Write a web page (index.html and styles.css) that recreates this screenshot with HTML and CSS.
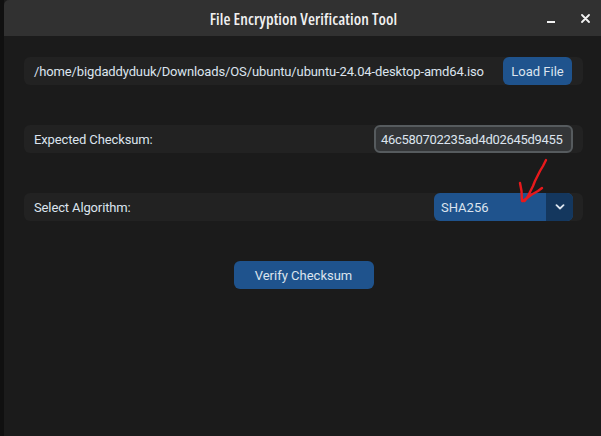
FILE: index.html
```html
<!DOCTYPE html>
<html>
<head>
<meta charset="utf-8">
<link rel="stylesheet" href="styles.css">
</head>
<body>
<div class="screen">
  <div class="edge"></div>
  <div class="window">
    <div class="titlebar">
      <div class="title">File Encryption Verification Tool</div>
      <div class="controls">
        <span class="min"></span>
        <svg class="close" width="9" height="9" viewBox="0 0 9 9"><path d="M1 1 L8 8 M8 1 L1 8" stroke="#f2f2f2" stroke-width="1.8" stroke-linecap="round"/></svg>
      </div>
    </div>
    <div class="content">
      <div class="row">
        <span class="label">/home/bigdaddyduuk/Downloads/OS/ubuntu/ubuntu-24.04-desktop-amd64.iso</span>
        <button class="btn load">Load File</button>
      </div>
      <div class="row">
        <span class="label">Expected Checksum:</span>
        <div class="entry">46c580702235ad4d02645d9455</div>
      </div>
      <div class="row">
        <span class="label">Select Algorithm:</span>
        <div class="select">
          <span class="select-value">SHA256</span>
          <span class="select-arrow">
            <svg width="10" height="6" viewBox="0 0 10 6"><path d="M1.5 1.2 L5 4.5 L8.5 1.2" fill="none" stroke="#dce4ee" stroke-width="1.8" stroke-linecap="round" stroke-linejoin="round"/></svg>
          </span>
        </div>
      </div>
      <div class="actions">
        <button class="btn verify">Verify Checksum</button>
      </div>
    </div>
  </div>
  <svg class="annotation" width="40" height="50" viewBox="0 0 40 50">
    <path d="M30 3 L27 9 L24 14 L22 18 L19 24 L17 29 L14 35 L11 41 L8.5 44" fill="none" stroke="#e8191c" stroke-width="2.4" stroke-linecap="round" stroke-linejoin="round"/>
    <path d="M4 26 L5.5 34 L6 44 L9 43" fill="none" stroke="#e8191c" stroke-width="2.4" stroke-linecap="round" stroke-linejoin="round"/>
    <path d="M7 44 L15 38 L22 34 L26 31" fill="none" stroke="#e8191c" stroke-width="2.4" stroke-linecap="round" stroke-linejoin="round"/>
  </svg>
</div>
</body>
</html>
```

FILE: styles.css
```css
html, body {
  margin: 0;
  padding: 0;
  background: #1b1b1b;
}

.screen {
  position: relative;
  display: flex;
  width: 601px;
  height: 436px;
  overflow: hidden;
  font-family: Roboto, "Noto Sans", sans-serif;
}

.edge {
  width: 4px;
  flex: none;
  background: #101010;
}

.window {
  flex: 1;
  display: flex;
  flex-direction: column;
  background: #1b1b1b;
}

.titlebar {
  position: relative;
  height: 36px;
  flex: none;
  background: #313131;
  border-top-left-radius: 5px;
  display: flex;
  align-items: center;
  justify-content: center;
}

.title {
  font-family: "Open Sans", Roboto, sans-serif;
  font-stretch: 75%;
  font-weight: 600;
  font-size: 16px;
  letter-spacing: 0.1px;
  color: #f0f0f0;
  margin-left: 2px;
  margin-top: 1px;
}

.controls {
  position: absolute;
  right: 11px;
  top: 0;
  height: 36px;
  display: flex;
  align-items: center;
  gap: 26px;
}

.min {
  display: block;
  width: 8px;
  height: 2px;
  background: #f2f2f2;
  margin-top: 7px;
}

.close {
  display: block;
}

.content {
  padding: 21px 18px 0 20px;
  display: flex;
  flex-direction: column;
  gap: 40px;
}

.row {
  height: 28px;
  box-sizing: border-box;
  background: #222222;
  border-radius: 6px;
  display: flex;
  align-items: center;
  justify-content: space-between;
  padding: 0 10px 0 10px;
}

.row:first-child {
  padding-right: 11px;
}

.label {
  font-size: 13px;
  letter-spacing: -0.13px;
  color: #dce4ee;
  white-space: nowrap;
}

.btn {
  font-family: Roboto, "Noto Sans", sans-serif;
  font-size: 13px;
  color: #dce4ee;
  background: #1f538d;
  border: none;
  border-radius: 6px;
  height: 28px;
  padding: 0;
  cursor: pointer;
}

.load {
  width: 69px;
}

.entry {
  box-sizing: border-box;
  width: 199px;
  height: 28px;
  border: 2px solid #565b5e;
  background: #343638;
  border-radius: 6px;
  color: #dce4ee;
  font-size: 13px;
  letter-spacing: -0.3px;
  padding-left: 5px;
  display: flex;
  align-items: center;
  white-space: nowrap;
  overflow: hidden;
}

.select {
  width: 139px;
  height: 28px;
  display: flex;
  border-radius: 6px;
  overflow: hidden;
  background: #1f538d;
}

.select-value {
  flex: 1;
  display: flex;
  align-items: center;
  padding-left: 7px;
  font-size: 13px;
  color: #dce4ee;
}

.select-arrow {
  width: 27px;
  background: #14375e;
  display: flex;
  align-items: center;
  justify-content: center;
}

.select-arrow svg {
  display: block;
}

.actions {
  display: flex;
  justify-content: center;
}

.verify {
  width: 140px;
}

.annotation {
  position: absolute;
  left: 516px;
  top: 157px;
}
```
